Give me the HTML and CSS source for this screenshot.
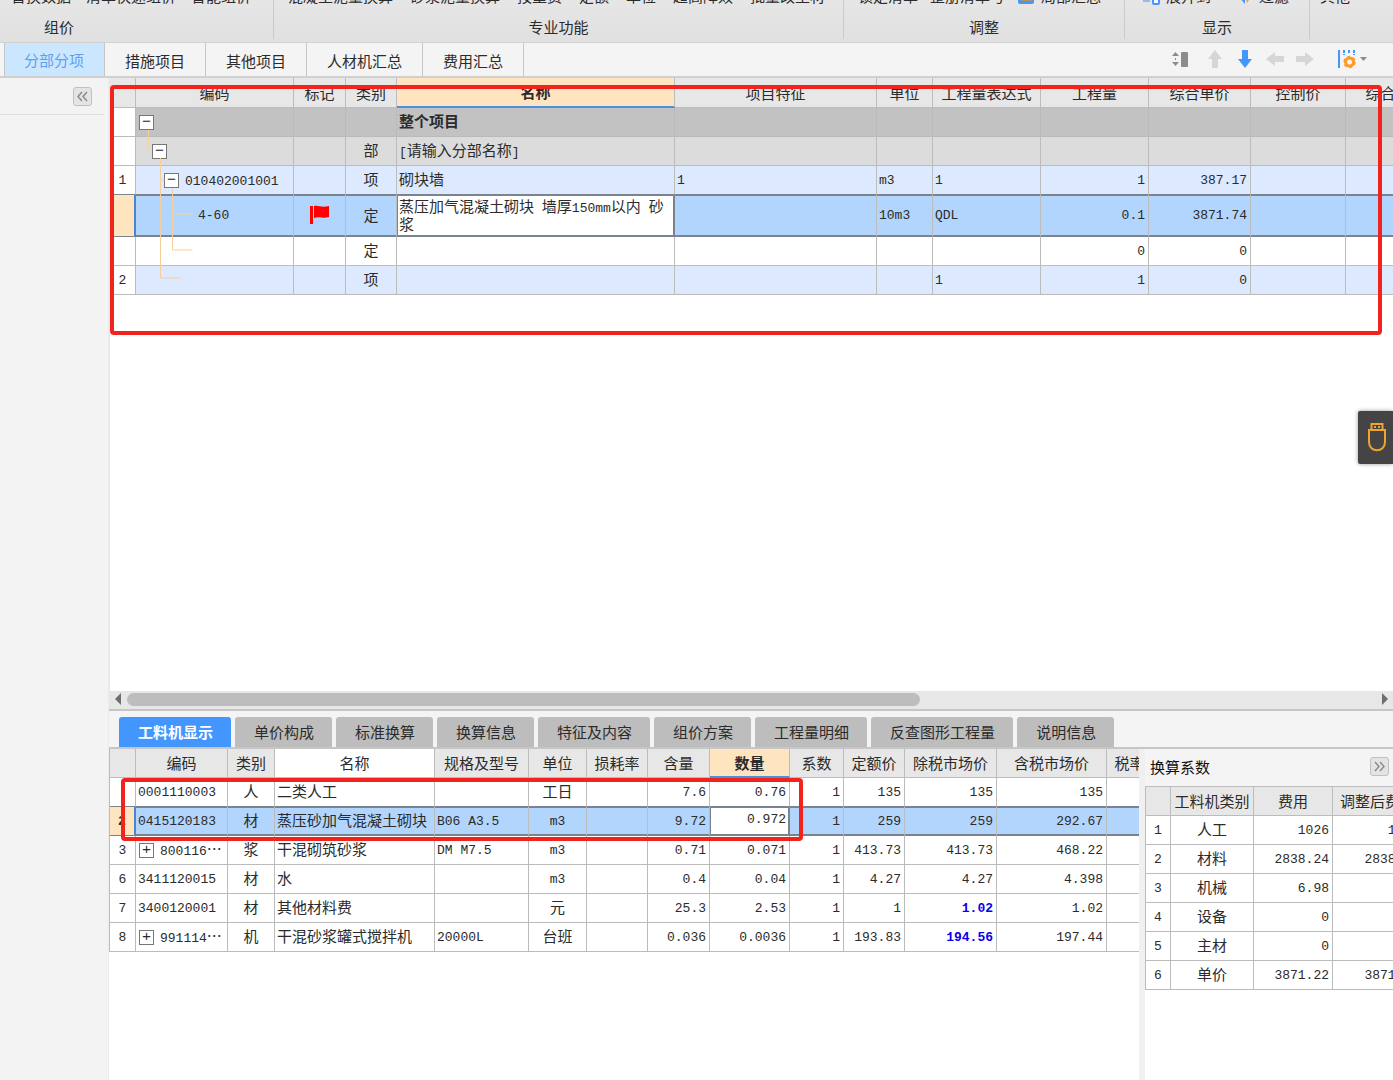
FILE: index.html
```html
<!DOCTYPE html>
<html lang="zh-CN">
<head>
<meta charset="utf-8">
<title>分部分项</title>
<link rel="stylesheet" href="styles.css">
</head>
<body>
<div class="app">
  <header class="ribbon">
    <section class="group group-compose">
      <div class="commands"><span>替换数据</span><span>清单快速组价</span><span>智能组价</span></div>
      <div class="group-title">组价</div>
    </section>
    <section class="group group-pro">
      <div class="commands"><span>混凝土泥量换算</span><span>砂浆泥量换算</span><span>按重费</span><span>定额</span><span>单位</span><span>超高降效</span><span>批量改主材</span></div>
      <div class="group-title">专业功能</div>
    </section>
    <section class="group group-adjust">
      <div class="commands"><span>锁定清单</span><span>整册清单号</span><span class="with-icon"><svg width="18" height="16" viewBox="0 0 18 16"><rect x="1" y="1" width="16" height="14" rx="2" fill="#4b97ea"/><path d="M4 9h10v3H4z" fill="#b09468"/></svg>局部汇总</span></div>
      <div class="group-title">调整</div>
    </section>
    <section class="group group-view">
      <div class="commands"><span class="with-icon"><svg width="18" height="16" viewBox="0 0 18 16"><path d="M1 12h7" stroke="#8fbdf5" stroke-width="2"/><rect x="11" y="7" width="6" height="8" rx="1" fill="#fff" stroke="#4496ff" stroke-width="2"/></svg>展开到</span><span class="with-icon"><svg width="16" height="16" viewBox="0 0 16 16"><path d="M0 6h8v9z" fill="#4496ff"/><path d="M8 6h7l-5 8z" fill="#f5a030"/></svg>过滤</span></div>
      <div class="group-title">显示</div>
    </section>
    <section class="group group-other">
      <div class="commands"><span>其他</span></div>
    </section>
  </header>

  <nav class="tabbar">
    <div class="tabs">
      <button class="tab active">分部分项</button>
      <button class="tab">措施项目</button>
      <button class="tab">其他项目</button>
      <button class="tab">人材机汇总</button>
      <button class="tab">费用汇总</button>
    </div>
    <div class="tools">
      <button class="tool" aria-label="行高"><svg width="18" height="18" viewBox="0 0 18 18"><path d="M4.500 2L8 6H1zM4.500 16L8 12H1zM4 8h1v2H4z" fill="#8c8c8c"/><rect x="10" y="2" width="7" height="15" rx="1" fill="#8c8c8c"/></svg></button>
      <button class="tool" aria-label="上移"><svg width="20" height="20" viewBox="0 0 20 20"><path d="M10 1l7 9h-4v9H7v-9H3z" fill="#d6d6d6"/></svg></button>
      <button class="tool" aria-label="下移"><svg width="20" height="20" viewBox="0 0 20 20"><path d="M10 19l7-9h-4V1H7v9H3z" fill="#4496ff"/></svg></button>
      <button class="tool" aria-label="左移"><svg width="20" height="20" viewBox="0 0 20 20"><path d="M1 10l9-7v4h9v6h-9v4z" fill="#d6d6d6"/></svg></button>
      <button class="tool" aria-label="右移"><svg width="20" height="20" viewBox="0 0 20 20"><path d="M19 10l-9-7v4H1v6h9v4z" fill="#d6d6d6"/></svg></button>
      <button class="tool tool-menu" aria-label="列设置"><svg width="32" height="20" viewBox="0 0 32 20"><path d="M2 1v18" stroke="#4496ff" stroke-width="2"/><path d="M7 1v5M12 1v4M17 1v5" stroke="#4496ff" stroke-width="2" stroke-dasharray="3 1"/><circle cx="12.500" cy="13" r="4" fill="none" stroke="#ff9a26" stroke-width="3"/><circle cx="12.500" cy="13" r="5.500" fill="none" stroke="#ff9a26" stroke-width="1.500" stroke-dasharray="2.900 2.860"/><path d="M23 8h7l-3.500 4z" fill="#8c8c8c"/></svg></button>
    </div>
  </nav>

  <div class="workspace">
    <aside class="sidebar">
      <div class="sidebar-head"><button class="fold" aria-label="收起"><svg width="11" height="11" viewBox="0 0 11 11"><path d="M5 1L1 5.500 5 10M10 1L6 5.500 10 10" fill="none" stroke="#8c8c8c" stroke-width="1.500"/></svg></button></div>
    </aside>

    <main class="main">
      <section class="list-pane">
        <div class="clip">
        <table class="grid list">
          <colgroup><col class="w26"><col class="w158"><col class="w52"><col class="w51"><col class="w278"><col class="w202"><col class="w56"><col class="w108"><col class="w108"><col class="w102"><col class="w95"><col class="w100"></colgroup>
          <thead><tr><th></th><th>编码</th><th>标记</th><th>类别</th><th class="current">名称</th><th>项目特征</th><th>单位</th><th>工程量表达式</th><th>工程量</th><th>综合单价</th><th>控制价</th><th>综合合价</th></tr></thead>
          <tbody>
            <tr class="total"><td class="idx"></td><td class="level-1"><button class="toggle" aria-label="折叠">−</button></td><td></td><td></td><td class="strong">整个项目</td><td></td><td></td><td></td><td></td><td></td><td></td><td></td></tr>
            <tr class="part"><td class="idx"></td><td class="level-2"><button class="toggle" aria-label="折叠">−</button></td><td></td><td class="mid">部</td><td><span class="n">[</span>请输入分部名称<span class="n">]</span></td><td></td><td></td><td></td><td></td><td></td><td></td><td></td></tr>
            <tr class="item before-selected"><td class="idx">1</td><td class="level-3"><button class="toggle" aria-label="折叠">−</button><span class="n">010402001001</span></td><td></td><td class="mid">项</td><td>砌块墙</td><td class="n">1</td><td class="n">m3</td><td class="n">1</td><td class="n num">1</td><td class="n num">387.17</td><td></td><td></td></tr>
            <tr class="selected tall"><td class="idx"></td><td class="n level-4">4-60</td><td class="mid"><svg class="flag" width="22" height="20" viewBox="0 0 22 20"><path d="M1 1h3v18H1z" fill="#f00"/><path d="M5 1c5-1 7 2 15 0v11c-7 2-9-1-15 1z" fill="#f00"/></svg></td><td class="mid">定</td><td class="editing">蒸压加气混凝土砌块<span class="n"> </span>墙厚<span class="n">150mm</span>以内<span class="n"> </span>砂浆</td><td></td><td class="n">10m3</td><td class="n">QDL</td><td class="n num">0.1</td><td class="n num">3871.74</td><td></td><td></td></tr>
            <tr><td class="idx"></td><td></td><td></td><td class="mid">定</td><td></td><td></td><td></td><td></td><td class="n num">0</td><td class="n num">0</td><td></td><td></td></tr>
            <tr class="item"><td class="idx">2</td><td></td><td></td><td class="mid">项</td><td></td><td></td><td></td><td class="n">1</td><td class="n num">1</td><td class="n num">0</td><td></td><td></td></tr>
          </tbody>
        </table>
        </div>
        <svg class="branches" width="60" height="160" viewBox="0 0 60 160"><path d="M8.500 0v20M20.500 28v120h20M20.500 50h4M32.500 59v61h20M32.500 84h20" fill="none" stroke="#f7cf9c"/></svg>
        <div class="mark mark-list"></div>
        <button class="dongle" aria-label="加密锁"><svg width="20" height="30" viewBox="0 0 20 30"><path d="M4.500 1h11v6h-11zM8 3v2M12 3v2" fill="none" stroke="#f0a32e" stroke-width="2"/><path d="M2 7h16v12c0 11-16 11-16 0z" fill="none" stroke="#f0a32e" stroke-width="2"/></svg></button>
      </section>

      <div class="scrollbar">
        <svg width="8" height="12" viewBox="0 0 8 12"><path d="M7 0v12L1 6z" fill="#6e6e6e"/></svg>
        <div class="track"><div class="thumb"></div></div>
        <svg width="8" height="12" viewBox="0 0 8 12"><path d="M1 0v12l6-6z" fill="#6e6e6e"/></svg>
      </div>

      <nav class="detail-tabs">
        <button class="dtab active">工料机显示</button>
        <button class="dtab">单价构成</button>
        <button class="dtab">标准换算</button>
        <button class="dtab">换算信息</button>
        <button class="dtab">特征及内容</button>
        <button class="dtab">组价方案</button>
        <button class="dtab">工程量明细</button>
        <button class="dtab">反查图形工程量</button>
        <button class="dtab">说明信息</button>
      </nav>

      <section class="detail">
        <div class="resources">
          <div class="clip">
          <table class="grid res">
            <colgroup><col class="w26"><col class="w92"><col class="w47"><col class="w160"><col class="w94"><col class="w58"><col class="w61"><col class="w62"><col class="w80"><col class="w54"><col class="w61"><col class="w92"><col class="w110"><col class="w46"></colgroup>
            <thead><tr><th></th><th>编码</th><th>类别</th><th class="plain">名称</th><th>规格及型号</th><th>单位</th><th>损耗率</th><th>含量</th><th class="current">数量</th><th>系数</th><th>定额价</th><th>除税市场价</th><th>含税市场价</th><th>税率</th></tr></thead>
            <tbody>
              <tr class="before-selected"><td class="idx"></td><td class="n">0001110003</td><td class="mid">人</td><td>二类人工</td><td></td><td class="mid">工日</td><td></td><td class="n num">7.6</td><td class="n num">0.76</td><td class="n num">1</td><td class="n num">135</td><td class="n num">135</td><td class="n num">135</td><td></td></tr>
              <tr class="selected"><td class="idx strong">2</td><td class="n">0415120183</td><td class="mid">材</td><td>蒸压砂加气混凝土砌块</td><td class="n">B06 A3.5</td><td class="n mid">m3</td><td></td><td class="n num">9.72</td><td class="editing"><input class="quantity" aria-label="数量" value="0.972"></td><td class="n num">1</td><td class="n num">259</td><td class="n num">259</td><td class="n num">292.67</td><td></td></tr>
              <tr><td class="idx">3</td><td class="level-1"><button class="toggle" aria-label="展开">+</button><span class="n">800116</span>…</td><td class="mid">浆</td><td>干混砌筑砂浆</td><td class="n">DM M7.5</td><td class="n mid">m3</td><td></td><td class="n num">0.71</td><td class="n num">0.071</td><td class="n num">1</td><td class="n num">413.73</td><td class="n num">413.73</td><td class="n num">468.22</td><td></td></tr>
              <tr><td class="idx">6</td><td class="n">3411120015</td><td class="mid">材</td><td>水</td><td></td><td class="n mid">m3</td><td></td><td class="n num">0.4</td><td class="n num">0.04</td><td class="n num">1</td><td class="n num">4.27</td><td class="n num">4.27</td><td class="n num">4.398</td><td></td></tr>
              <tr><td class="idx">7</td><td class="n">3400120001</td><td class="mid">材</td><td>其他材料费</td><td></td><td class="mid">元</td><td></td><td class="n num">25.3</td><td class="n num">2.53</td><td class="n num">1</td><td class="n num">1</td><td class="n num changed">1.02</td><td class="n num">1.02</td><td></td></tr>
              <tr><td class="idx">8</td><td class="level-1"><button class="toggle" aria-label="展开">+</button><span class="n">991114</span>…</td><td class="mid">机</td><td>干混砂浆罐式搅拌机</td><td class="n">20000L</td><td class="mid">台班</td><td></td><td class="n num">0.036</td><td class="n num">0.0036</td><td class="n num">1</td><td class="n num">193.83</td><td class="n num changed">194.56</td><td class="n num">197.44</td><td></td></tr>
            </tbody>
          </table>
          </div>
          <div class="mark mark-resources"></div>
        </div>
        <aside class="factors">
          <div class="factors-head"><h2>换算系数</h2><button class="fold" aria-label="展开"><svg width="11" height="11" viewBox="0 0 11 11"><path d="M1 1l4 4.500L1 10M6 1l4 4.500L6 10" fill="none" stroke="#8c8c8c" stroke-width="1.500"/></svg></button></div>
          <div class="clip">
          <table class="grid fac">
            <colgroup><col class="w25"><col class="w83"><col class="w79"><col class="w90"></colgroup>
            <thead><tr><th></th><th>工料机类别</th><th>费用</th><th>调整后费用</th></tr></thead>
            <tbody>
              <tr><td class="idx">1</td><td class="mid">人工</td><td class="n num">1026</td><td class="n num">1026</td></tr>
              <tr><td class="idx">2</td><td class="mid">材料</td><td class="n num">2838.24</td><td class="n num">2838.24</td></tr>
              <tr><td class="idx">3</td><td class="mid">机械</td><td class="n num">6.98</td><td></td></tr>
              <tr><td class="idx">4</td><td class="mid">设备</td><td class="n num">0</td><td></td></tr>
              <tr><td class="idx">5</td><td class="mid">主材</td><td class="n num">0</td><td></td></tr>
              <tr><td class="idx">6</td><td class="mid">单价</td><td class="n num">3871.22</td><td class="n num">3871.22</td></tr>
            </tbody>
          </table>
          </div>
        </aside>
      </section>
    </main>
  </div>
</div>
</body>
</html>
```
FILE: styles.css
```css
* { box-sizing: border-box; }

body {
  margin: 0;
  font: 15px/18px "Noto Sans CJK SC", sans-serif;
  color: #2b2b2b;
  background: #fff;
}

button {
  margin: 0;
  padding: 0;
  border: 0;
  background: none;
  font: inherit;
  color: inherit;
}

svg { display: block; }

.app {
  display: flex;
  flex-direction: column;
  height: 100vh;
  overflow: hidden;
}

/* Ribbon */
.ribbon {
  display: flex;
  flex: none;
  height: 43px;
  overflow: hidden;
  background: linear-gradient(#e6e6e6, #e0e0e0);
  border-bottom: 1px solid #d2d2d2;
}

.group {
  flex: none;
  height: 39px;
  overflow: hidden;
  border-right: 1px solid #cacaca;
}

.group-compose { width: 274px; }
.group-pro { width: 570px; }
.group-adjust { width: 281px; }
.group-view { width: 185px; }
.group-other { flex: 1; border-right: 0; }

.commands {
  display: flex;
  align-items: flex-end;
  gap: 17px;
  height: 5px;
  padding-left: 14px;
  white-space: nowrap;
}

.group-compose .commands { gap: 15px; padding-left: 11px; }
.group-adjust .commands { gap: 12px; }
.group-view .commands { gap: 26px; padding-left: 17px; }
.group-other .commands { padding-left: 10px; }

.with-icon { display: flex; align-items: flex-end; gap: 6px; }

.group-title {
  padding-top: 13px;
  text-align: center;
}

.group-compose .group-title { width: 118px; }

/* Document tabs */
.tabbar {
  display: flex;
  flex: none;
  justify-content: space-between;
  align-items: stretch;
  height: 35px;
  padding: 0 24px 0 4px;
  background: #f4f4f4;
  border-bottom: 2px solid #d0d0d0;
}

.tabs { display: flex; border-left: 1px solid #c6c6c6; }

.tab {
  padding: 3px 20px 0;
  border-right: 1px solid #c6c6c6;
}

.tab.active { padding: 0 20px 0 19px; background: #cbe7ff; color: #5f9ff0; }

.tools { display: flex; align-items: center; padding-bottom: 2px; }

.tool {
  display: flex;
  justify-content: center;
  width: 30px;
}

.tool:first-child { width: 36px; justify-content: flex-start; padding-left: 7px; }
.tool-menu { width: 49px; justify-content: flex-end; }

/* Work area */
.workspace { display: flex; flex: 1; min-height: 0; }

.sidebar {
  flex: none;
  width: 109px;
  background: #f3f3f3;
  border-right: 1px solid #ececec;
}

.sidebar-head {
  display: flex;
  justify-content: flex-end;
  align-items: center;
  width: 104px;
  height: 37px;
  padding-right: 12px;
  border-bottom: 1px solid #dedede;
}

.fold {
  display: flex;
  align-items: center;
  justify-content: center;
  width: 19px;
  height: 19px;
  border: 1px solid #c0c0c0;
  border-radius: 3px;
  background: #e4e4e4;
}

.main {
  display: flex;
  flex: 1;
  flex-direction: column;
  min-width: 0;
}

.list-pane { position: relative; flex: 1; min-height: 0; }

.clip { overflow: hidden; border-left: 1px solid #bcbcbc; }

.list-pane .clip { height: 100%; border-left-color: #e8e8e8; }

/* Grids */
.grid {
  table-layout: fixed;
  border-spacing: 0;
}

.list { width: 1336px; }
.res { width: 1043px; }
.fac { width: 277px; }

.w25 { width: 25px; }
.w26 { width: 26px; }
.w46 { width: 46px; }
.w47 { width: 47px; }
.w51 { width: 51px; }
.w52 { width: 52px; }
.w54 { width: 54px; }
.w56 { width: 56px; }
.w58 { width: 58px; }
.w61 { width: 61px; }
.w62 { width: 62px; }
.w79 { width: 79px; }
.w80 { width: 80px; }
.w83 { width: 83px; }
.w90 { width: 90px; }
.w92 { width: 92px; }
.w94 { width: 94px; }
.w95 { width: 95px; }
.w100 { width: 100px; }
.w102 { width: 102px; }
.w108 { width: 108px; }
.w110 { width: 110px; }
.w158 { width: 158px; }
.w160 { width: 160px; }
.w202 { width: 202px; }
.w278 { width: 278px; }

.grid th, .grid td {
  height: 29px;
  padding: 0 3px 2px 2px;
  border-right: 1px solid #bcbcbc;
  border-bottom: 1px solid #bcbcbc;
  overflow: hidden;
  white-space: nowrap;
  text-align: left;
  vertical-align: middle;
}

.grid th {
  padding: 0;
  background: #e7e7e7;
  font-weight: 400;
  text-align: center;
}

.list th { height: 30px; }

.grid th.plain { background: #fff; }

.grid th.current {
  background: #ffe4c0;
  border-bottom: 2px solid #4a90e2;
  font-weight: 700;
}

.grid .mid { padding: 0 0 2px; text-align: center; }
.grid .num { text-align: right; }

.grid td.idx {
  padding: 2px 0 0;
  font: 13px/18px "Liberation Mono", monospace;
  text-align: center;
  background: #fff;
}

.n {
  font-family: "Liberation Mono", monospace;
  font-size: 13px;
  line-height: 13px;
  white-space: pre;
}

.grid td.n { padding-bottom: 0; }

.grid td.changed { color: #0a00f0; font-weight: 700; }
.grid td.strong { font-weight: 700; }

.grid .total td { background: #c2c2c2; border-color: #bababa; }
.grid .part td { background: #dcdcdc; }
.grid .item td { background: #dce9fe; }
.grid .total .idx, .grid .part .idx, .grid .item .idx { background: #fff; }

.grid .before-selected td { border-bottom-color: #7b838c; }

.grid .selected td {
  background: #b2d5fe;
  border-bottom-color: #7b838c;
  box-shadow: inset 0 1px #7b838c, inset 0 -1px #7b838c;
}

.grid .selected .idx {
  background: #ffe4c0;
  border-right: 2px solid #4a86d0;
  box-shadow: none;
}

.grid .tall td { height: 42px; }

.grid .selected .editing {
  background: #fff;
  border-right-color: #7b838c;
  box-shadow: inset 1px 1px #7b838c, inset -1px -1px #7b838c;
  white-space: normal;
}

.grid .selected .editing .n { white-space: normal; }

.quantity {
  display: block;
  width: 100%;
  padding: 0;
  border: 0;
  outline: 0;
  background: none;
  color: inherit;
  font: 13px/18px "Liberation Mono", monospace;
  text-align: right;
}

.grid .level-1 { padding-left: 3px; }
.grid .level-2 { padding-left: 16px; }
.grid .level-3 { padding-left: 28px; }
.grid .level-4 { padding-left: 62px; }

.toggle {
  width: 15px;
  height: 15px;
  margin-right: 6px;
  border: 1px solid #777;
  background: #fff;
  font: 15px/13px "Liberation Mono", monospace;
  text-align: center;
  vertical-align: middle;
}

.flag { margin: 0 auto; }

.branches {
  position: absolute;
  left: 31px;
  top: 52px;
}

.mark {
  position: absolute;
  border: 4px solid #f1231c;
  border-radius: 4px;
  pointer-events: none;
}

.mark-list { left: 1px; right: 11px; top: 7px; height: 250px; }
.mark-resources { left: 12px; top: 29px; width: 682px; height: 63px; }

.dongle {
  position: absolute;
  right: 0;
  top: 333px;
  display: flex;
  align-items: center;
  justify-content: center;
  width: 35px;
  height: 53px;
  padding-left: 3px;
  background: #444;
  border-radius: 2px 0 0 2px;
  box-shadow: 0 0 4px #999;
}

/* Horizontal scroll bar */
.scrollbar {
  display: flex;
  flex: none;
  align-items: center;
  gap: 5px;
  height: 20px;
  padding: 0 4px 2px 5px;
  background: #e7e7e7;
  border-bottom: 2px solid #c6c6c6;
}

.track { flex: 1; }

.thumb {
  width: 63.5%;
  height: 13px;
  border-radius: 7px;
  background: #bdbdbd;
}

/* Detail area */
.detail-tabs {
  display: flex;
  flex: none;
  align-items: flex-end;
  gap: 4px;
  height: 38px;
  padding: 0 10px;
  background: #f4f4f4;
  border-bottom: 2px solid #c6c6c6;
}

.dtab {
  height: 30px;
  padding: 0 18px 0 19px;
  border-radius: 3px 3px 0 0;
  background: #bdbdbd;
  white-space: nowrap;
}

.dtab.active { background: #4496ff; color: #fff; font-weight: 700; }

.detail { display: flex; flex: none; height: 331px; }

.resources { position: relative; flex: 1; min-width: 0; }

.factors {
  flex: none;
  width: 254px;
  border-left: 6px solid #f0f0f0;
}

.factors-head {
  display: flex;
  align-items: center;
  justify-content: space-between;
  height: 38px;
  padding: 0 4px 2px 5px;
  background: #f4f4f4;
  border-bottom: 1px solid #bcbcbc;
}

.factors-head h2 { margin: 0; font-size: 15px; font-weight: 400; color: #111; }
```
